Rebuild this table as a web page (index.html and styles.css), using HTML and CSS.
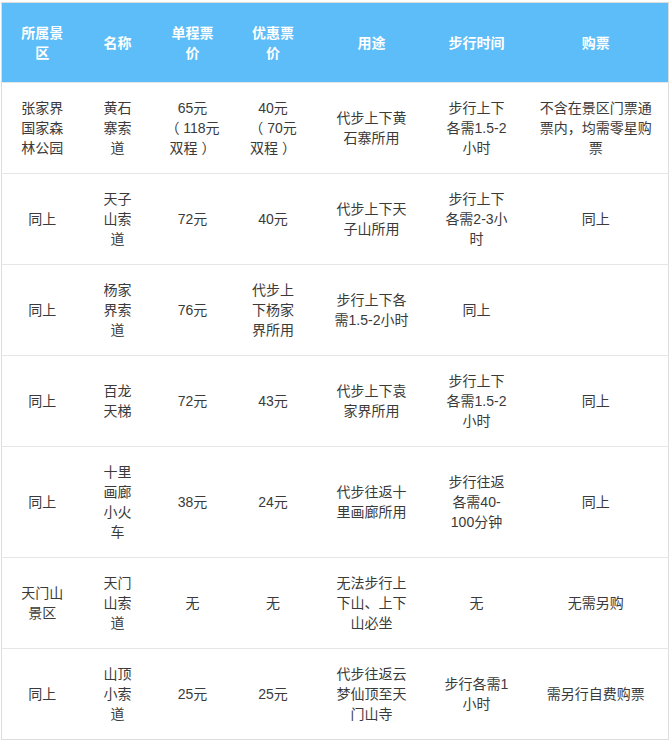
FILE: index.html
```html
<!DOCTYPE html>
<html lang="zh-CN">
<head>
<meta charset="utf-8">
<title>张家界索道</title>
<link rel="stylesheet" href="styles.css">
</head>
<body>
<table class="fare-table">
  <colgroup>
    <col class="c1"><col class="c2"><col class="c3"><col class="c4"><col class="c5"><col class="c6"><col class="c7">
  </colgroup>
  <thead>
    <tr>
      <th>所属景<br>区</th>
      <th>名称</th>
      <th>单程票<br>价</th>
      <th>优惠票<br>价</th>
      <th>用途</th>
      <th>步行时间</th>
      <th>购票</th>
    </tr>
  </thead>
  <tbody>
    <tr>
      <td>张家界<br>国家森<br>林公园</td>
      <td>黄石<br>寨索<br>道</td>
      <td>65元<br>（ 118元<br>双程 ）</td>
      <td>40元<br>（ 70元<br>双程 ）</td>
      <td>代步上下黄<br>石寨所用</td>
      <td>步行上下<br>各需1.5-2<br>小时</td>
      <td>不含在景区门票通<br>票内，均需零星购<br>票</td>
    </tr>
    <tr>
      <td>同上</td>
      <td>天子<br>山索<br>道</td>
      <td>72元</td>
      <td>40元</td>
      <td>代步上下天<br>子山所用</td>
      <td>步行上下<br>各需2-3小<br>时</td>
      <td>同上</td>
    </tr>
    <tr>
      <td>同上</td>
      <td>杨家<br>界索<br>道</td>
      <td>76元</td>
      <td>代步上<br>下杨家<br>界所用</td>
      <td>步行上下各<br>需1.5-2小时</td>
      <td>同上</td>
      <td></td>
    </tr>
    <tr>
      <td>同上</td>
      <td>百龙<br>天梯</td>
      <td>72元</td>
      <td>43元</td>
      <td>代步上下袁<br>家界所用</td>
      <td>步行上下<br>各需1.5-2<br>小时</td>
      <td>同上</td>
    </tr>
    <tr>
      <td>同上</td>
      <td>十里<br>画廊<br>小火<br>车</td>
      <td>38元</td>
      <td>24元</td>
      <td>代步往返十<br>里画廊所用</td>
      <td>步行往返<br>各需40-<br>100分钟</td>
      <td>同上</td>
    </tr>
    <tr>
      <td>天门山<br>景区</td>
      <td>天门<br>山索<br>道</td>
      <td>无</td>
      <td>无</td>
      <td>无法步行上<br>下山、上下<br>山必坐</td>
      <td>无</td>
      <td>无需另购</td>
    </tr>
    <tr>
      <td>同上</td>
      <td>山顶<br>小索<br>道</td>
      <td>25元</td>
      <td>25元</td>
      <td>代步往返云<br>梦仙顶至天<br>门山寺</td>
      <td>步行各需1<br>小时</td>
      <td>需另行自费购票</td>
    </tr>
  </tbody>
</table>
</body>
</html>
```
FILE: styles.css
```css
html, body {
  margin: 0;
  padding: 0;
  background: #ffffff;
}

body {
  font-family: "Liberation Sans", "Noto Sans CJK SC", sans-serif;
  font-size: 14px;
  color: #3a3a3a;
}

.fare-table {
  margin: 2px 0 0 1px;
  width: 667px;
  table-layout: fixed;
  border-collapse: collapse;
  border: 1px solid #dddddd;
}

.c1 { width: 81px; }
.c2 { width: 70px; }
.c3 { width: 80px; }
.c4 { width: 81px; }
.c5 { width: 116px; }
.c6 { width: 94px; }
.c7 { width: 145px; }

.fare-table th {
  background: #5cbdf8;
  color: #ffffff;
  font-weight: 700;
  line-height: 20px;
  padding: 20px 4px 19px;
  text-align: center;
  vertical-align: middle;
}

.fare-table td {
  line-height: 20px;
  padding: 15px 4px;
  text-align: center;
  vertical-align: middle;
  border-top: 1px solid #e6e6e6;
}
```
